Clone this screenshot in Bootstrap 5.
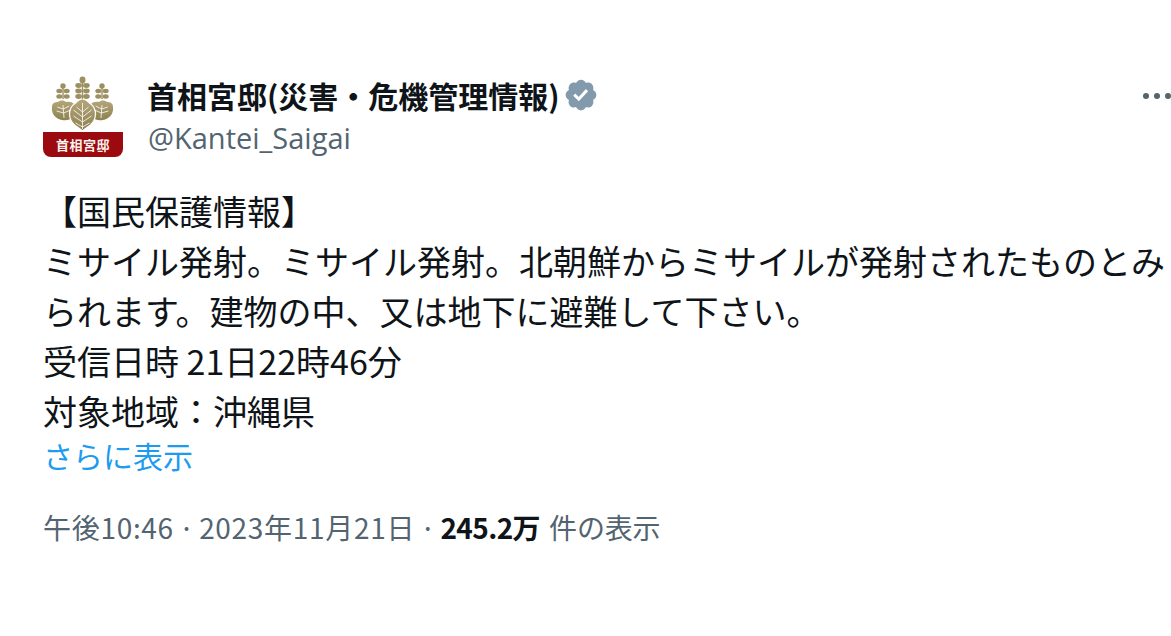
<!DOCTYPE html>
<html lang="ja">
<head>
<meta charset="utf-8">
<title>首相官邸</title>
<link href="https://cdn.jsdelivr.net/npm/bootstrap@5.3.0/dist/css/bootstrap.min.css" rel="stylesheet">
<style>
html,body{height:636px;overflow:hidden;background:#fff}
body{font-family:"Liberation Sans","Noto Sans CJK JP",sans-serif;color:#0f1419}
.tweet{padding:74px 0 0 43px}
.logo-box{width:80px;height:81px;margin:2px 25px 0 0;flex:none}
.logo-top{height:56px;background:#fff;display:block}
.logo-band{height:25px;background:#9b0a0f;color:#fbf3ee;border-radius:0 0 8px 8px;font:700 13px/25px "Noto Sans CJK JP",serif;text-align:center;letter-spacing:.5px}
.name-row{height:42px;gap:3px}
.uname{font:700 30px/42px "Noto Sans CJK JP",sans-serif;color:#0f1419;margin-left:-1px}
.handle{font:400 29px/40px "Open Sans","Liberation Sans",sans-serif;color:#536471;margin-top:2px}
.more{gap:5px;padding-top:19px;height:42px}
.more i{display:block;width:6px;height:6px;border-radius:50%;background:#536471}
.head-row{width:1128px}
.body-text{margin-top:28px;width:1128px;font:400 34px/50px "Noto Sans CJK JP",sans-serif;color:#0f1419}
.show-more{display:block;font:400 30px/40px "Noto Sans CJK JP",sans-serif;color:#1d9bf0;text-decoration:none;margin-top:-1px}
.meta{margin-top:32px;font:400 28px/40px "Noto Sans CJK JP",sans-serif;color:#536471;white-space:nowrap}
.meta b{color:#0f1419;font-weight:700;letter-spacing:-.6px}
.stamp{letter-spacing:.7px}
.sep{margin-inline:-1.500px}
.views{margin-left:3px;letter-spacing:-.2px}
</style>
</head>
<body>
<div class="tweet">
  <div class="d-flex head-row">
    <div class="logo-box">
      <svg class="logo-top" width="80" height="56" viewBox="0 0 80 56" aria-hidden="true">
        <defs><linearGradient id="gold" x1="0" y1="0" x2="0" y2="1"><stop offset="0" stop-color="#b5a67a"/><stop offset="1" stop-color="#8d8150"/></linearGradient></defs>
        <g fill="url(#gold)">
          <path d="M9 31c0-4 3-5 6-5 2-2 6-2 8 0 3-1 7 0 9 3 2 4 1 8-1 11-3 4-8 5-12 4-6-1-11-6-10-13z"/>
          <path d="M70 31c0-4-3-5-6-5-2-2-6-2-8 0-3-1-7 0-9 3-2 4-1 8 1 11 3 4 8 5 12 4 6-1 11-6 10-13z"/>
        </g>
        <path fill="url(#gold)" stroke="#fff" stroke-width="1.200" d="M39.500 23c3 0 5 2 7 4 3 2 6 6 6 11 0 5-2 8-5 11-3 2-5 3-8 6-3-3-5-4-8-6-3-3-5-6-5-11 0-5 3-9 6-11 2-2 4-4 7-4z"/>
        <g fill="none" stroke="#fff" stroke-width=".8">
          <path d="M39.500 27v26M39.500 36l-6-5M39.500 36l6-5M39.500 41l-9-7M39.500 41l9-7M39.500 46l-9-6M39.500 46l9-6M39.500 51l-7-4M39.500 51l7-4"/>
          <path d="M20 29l1 13M20.300 33l-6-2M20.300 33l6-3M20.600 37l-7-2M20.600 37l7-3M59 29l-1 13M58.700 33l6-2M58.700 33l-6-3M58.400 37l7-2M58.400 37l-7-3"/>
        </g>
        <g fill="#9c8f61">
          <rect x="38.800" y="4" width="1.400" height="19"/>
          <ellipse cx="39.500" cy="4" rx="3" ry="3.400"/>
          <ellipse cx="35.600" cy="9.500" rx="3.300" ry="2.400"/><ellipse cx="43.400" cy="9.500" rx="3.300" ry="2.400"/>
          <ellipse cx="35.600" cy="15" rx="3.300" ry="2.400"/><ellipse cx="43.400" cy="15" rx="3.300" ry="2.400"/>
          <ellipse cx="35.600" cy="20.500" rx="3.300" ry="2.400"/><ellipse cx="43.400" cy="20.500" rx="3.300" ry="2.400"/>
          <rect x="19.300" y="9" width="1.400" height="14"/>
          <ellipse cx="20" cy="10" rx="2.700" ry="2.700"/>
          <ellipse cx="16.300" cy="15" rx="3" ry="2.200"/><ellipse cx="23.700" cy="15" rx="3" ry="2.200"/>
          <ellipse cx="16.300" cy="20.500" rx="3" ry="2.200"/><ellipse cx="23.700" cy="20.500" rx="3" ry="2.200"/>
          <rect x="58.300" y="9" width="1.400" height="14"/>
          <ellipse cx="59" cy="10" rx="2.700" ry="2.700"/>
          <ellipse cx="55.300" cy="15" rx="3" ry="2.200"/><ellipse cx="62.700" cy="15" rx="3" ry="2.200"/>
          <ellipse cx="55.300" cy="20.500" rx="3" ry="2.200"/><ellipse cx="62.700" cy="20.500" rx="3" ry="2.200"/>
        </g>
      </svg>
      <div class="logo-band">首相宮邸</div>
    </div>
    <div class="flex-grow-1">
      <div class="d-flex align-items-center name-row">
        <span class="uname">首相宮邸(災害・危機管理情報)</span>
        <svg width="36" height="36" viewBox="0 0 24 24" aria-label="認証済み"><path fill="#829aab" fill-rule="evenodd" d="M22.250 12c0-1.430-.88-2.670-2.190-3.340.46-1.390.2-2.900-.81-3.910s-2.520-1.270-3.910-.81c-.66-1.310-1.910-2.190-3.340-2.190s-2.670.88-3.330 2.190c-1.400-.46-2.910-.2-3.920.81s-1.260 2.520-.8 3.910c-1.310.67-2.200 1.910-2.200 3.340s.89 2.670 2.200 3.340c-.46 1.390-.21 2.900.8 3.910s2.520 1.260 3.910.81c.67 1.310 1.910 2.190 3.340 2.190s2.680-.88 3.340-2.190c1.390.45 2.900.2 3.910-.81s1.270-2.520.81-3.910c1.310-.67 2.190-1.910 2.190-3.340zm-11.710 4.200L6.800 12.460l1.410-1.420 2.260 2.260 4.800-5.230 1.470 1.360-6.200 6.770z"/></svg>
      </div>
      <div class="handle">@Kantei_Saigai</div>
    </div>
    <div class="d-flex more"><i></i><i></i><i></i></div>
  </div>
  <div class="body-text">【国民保護情報】<br>ミサイル発射。ミサイル発射。北朝鮮からミサイルが発射されたものとみられます。建物の中、又は地下に避難して下さい。<br>受信日時 21日22時46分<br>対象地域：沖縄県</div>
  <a class="show-more" href="#">さらに表示</a>
  <div class="meta"><span class="stamp">午後10:46</span><span class="sep"> · </span><span class="stamp">2023年11月21日</span><span class="sep"> · </span><b>245.2万</b><span class="views"> 件の表示</span></div>
</div>
</body>
</html>
